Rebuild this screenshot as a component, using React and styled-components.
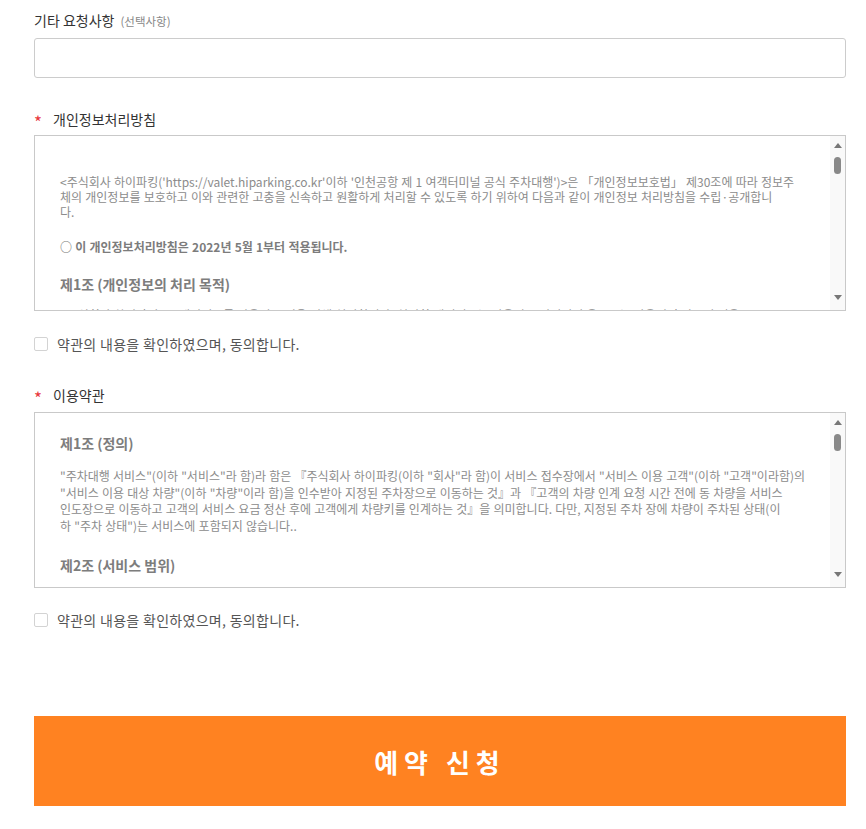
import React from 'react';
import styled, { createGlobalStyle } from 'styled-components';

const GlobalStyle = createGlobalStyle`
  body {
    margin: 0;
    background: #fff;
    font-family: "Noto Sans CJK KR", "Noto Sans", sans-serif;
  }
`;

const privacyIntro = [
  "<주식회사 하이파킹('https://valet.hiparking.co.kr'이하 '인천공항 제 1 여객터미널 공식 주차대행')>은 「개인정보보호법」 제30조에 따라 정보주",
  '체의 개인정보를 보호하고 이와 관련한 고충을 신속하고 원활하게 처리할 수 있도록 하기 위하여 다음과 같이 개인정보 처리방침을 수립·공개합니',
  '다.',
];

const privacyPurpose = [
  '<주식회사 하이파킹>은 개인정보를 다음의 목적을 위해 처리합니다. 처리한 개인정보는 다음의 목적이외의 용도로는 사용되지 않으며 이용 목',
];

const termsDefinition = [
  '"주차대행 서비스"(이하 "서비스"라 함)라 함은 『주식회사 하이파킹(이하 "회사"라 함)이 서비스 접수장에서 "서비스 이용 고객"(이하 "고객"이라함)의',
  '"서비스 이용 대상 차량"(이하 "차량"이라 함)을 인수받아 지정된 주차장으로 이동하는 것』과 『고객의 차량 인계 요청 시간 전에 동 차량을 서비스',
  '인도장으로 이동하고 고객의 서비스 요금 정산 후에 고객에게 차량키를 인계하는 것』을 의미합니다. 다만, 지정된 주차 장에 차량이 주차된 상태(이',
  '하 "주차 상태")는 서비스에 포함되지 않습니다..',
];

const termsScope = ['회사가 제공하는 서비스는 주차대행 서비스 및 이에 부수하는 서비스로 합니다.'];

const Page = styled.div`
  padding: 10px 20px 40px 34px;
`;

const Field = styled.section`
  margin-top: ${(p) => p.$gap || 0}px;
`;

const Label = styled.div`
  display: flex;
  align-items: baseline;
  height: 20px;
  line-height: 20px;
  font-size: 14px;
  color: #333;
  margin-bottom: ${(p) => p.$gap || 8}px;
`;

const Required = styled.span`
  display: inline-block;
  width: 7px;
  margin-right: 12px;
  font-size: 17px;
  color: #e8383d;
  transform: translateY(4px);
`;

const Optional = styled.span`
  font-size: 11.5px;
  color: #888;
  margin-left: 6px;
`;

const TextInput = styled.input`
  display: block;
  width: 100%;
  box-sizing: border-box;
  height: 40px;
  border: 1px solid #ccc;
  border-radius: 3px;
  padding: 0 12px;
  font: inherit;
  font-size: 14px;
  outline: none;
`;

const TermsBox = styled.div`
  display: flex;
  height: 176px;
  box-sizing: border-box;
  border: 1px solid #c9c9c9;
  background: #fff;
`;

const TermsBody = styled.div`
  flex: 1;
  min-width: 0;
  overflow: hidden;
  padding: 20px 24px 0 25px;
`;

const Paragraph = styled.p`
  margin: ${(p) => p.$top || 0}px 0 0;
  font-size: 12px;
  line-height: ${(p) => p.$lh || 15}px;
  word-spacing: 0.5px;
  font-weight: ${(p) => (p.$bold ? 'bold' : 'normal')};
  color: ${(p) => (p.$bold ? '#7c7c7c' : '#8c8c8c')};
`;

const Line = styled.span`
  display: block;
  white-space: nowrap;
`;

const Article = styled.h4`
  margin: ${(p) => p.$top || 0}px 0 0;
  font-size: 14px;
  line-height: 20px;
  font-weight: bold;
  color: #7d7d7d;
`;

const ScrollTrack = styled.div`
  flex: none;
  width: 15px;
  background: #f9f9f9;
  display: flex;
  flex-direction: column;
  align-items: center;
  padding: 7px 0 10px;
  box-sizing: border-box;
`;

const Arrow = styled.span`
  width: 0;
  height: 0;
  border-left: 4px solid transparent;
  border-right: 4px solid transparent;
  ${(p) => (p.$down ? 'border-top: 5px solid #777;' : 'border-bottom: 5px solid #777;')}
`;

const Thumb = styled.span`
  width: 7px;
  height: 17px;
  margin-top: 9px;
  border-radius: 4px;
  background: #888;
`;

const TrackSpace = styled.span`
  flex: 1;
`;

const CheckRow = styled.label`
  display: flex;
  align-items: center;
  gap: 9px;
  height: 20px;
  margin-top: ${(p) => p.$gap || 23}px;
  font-size: 14px;
  letter-spacing: 0.3px;
  color: #555;
`;

const CheckBox = styled.span`
  width: 14px;
  height: 14px;
  box-sizing: border-box;
  border: 1px solid #d3d3d3;
  border-radius: 2px;
  background: #fff;
`;

const SubmitButton = styled.button`
  display: block;
  width: 100%;
  height: 90px;
  margin-top: 86px;
  border: none;
  background: #ff8221;
  color: #fff;
  font-family: inherit;
  font-size: 26px;
  font-weight: bold;
  letter-spacing: 6px;
  cursor: pointer;
`;

const Scrollbar = () => (
  <ScrollTrack>
    <Arrow />
    <Thumb />
    <TrackSpace />
    <Arrow $down />
  </ScrollTrack>
);

const Text = ({ lines, top, lh, bold }) => (
  <Paragraph $top={top} $lh={lh} $bold={bold}>
    {lines.map((line, i) => (
      <Line key={i}>{line}</Line>
    ))}
  </Paragraph>
);

const Agree = ({ gap }) => (
  <CheckRow $gap={gap}>
    <CheckBox />
    약관의 내용을 확인하였으며, 동의합니다.
  </CheckRow>
);

const App = () => {
  return (
    <Page>
      <GlobalStyle />
      <Field>
        <Label>
          기타 요청사항<Optional>(선택사항)</Optional>
        </Label>
        <TextInput type="text" />
      </Field>

      <Field $gap={30}>
        <Label $gap={7}>
          <Required>*</Required>개인정보처리방침
        </Label>
        <TermsBox>
          <TermsBody>
            <Text lines={privacyIntro} top={18} />
            <Text lines={['○ 이 개인정보처리방침은 2022년 5월 1부터 적용됩니다.']} top={20} bold />
            <Article $top={20}>제1조 (개인정보의 처리 목적)</Article>
            <Text lines={privacyPurpose} top={13} />
          </TermsBody>
          <Scrollbar />
        </TermsBox>
      </Field>
      <Agree gap={23} />

      <Field $gap={30}>
        <Label>
          <Required>*</Required>이용약관
        </Label>
        <TermsBox>
          <TermsBody>
            <Article>제1조 (정의)</Article>
            <Text lines={termsDefinition} top={15} lh={16.5} />
            <Article $top={21}>제2조 (서비스 범위)</Article>
            <Text lines={termsScope} top={13} />
          </TermsBody>
          <Scrollbar />
        </TermsBox>
      </Field>
      <Agree gap={22} />

      <SubmitButton type="button">예약 신청</SubmitButton>
    </Page>
  );
};

export default App;
